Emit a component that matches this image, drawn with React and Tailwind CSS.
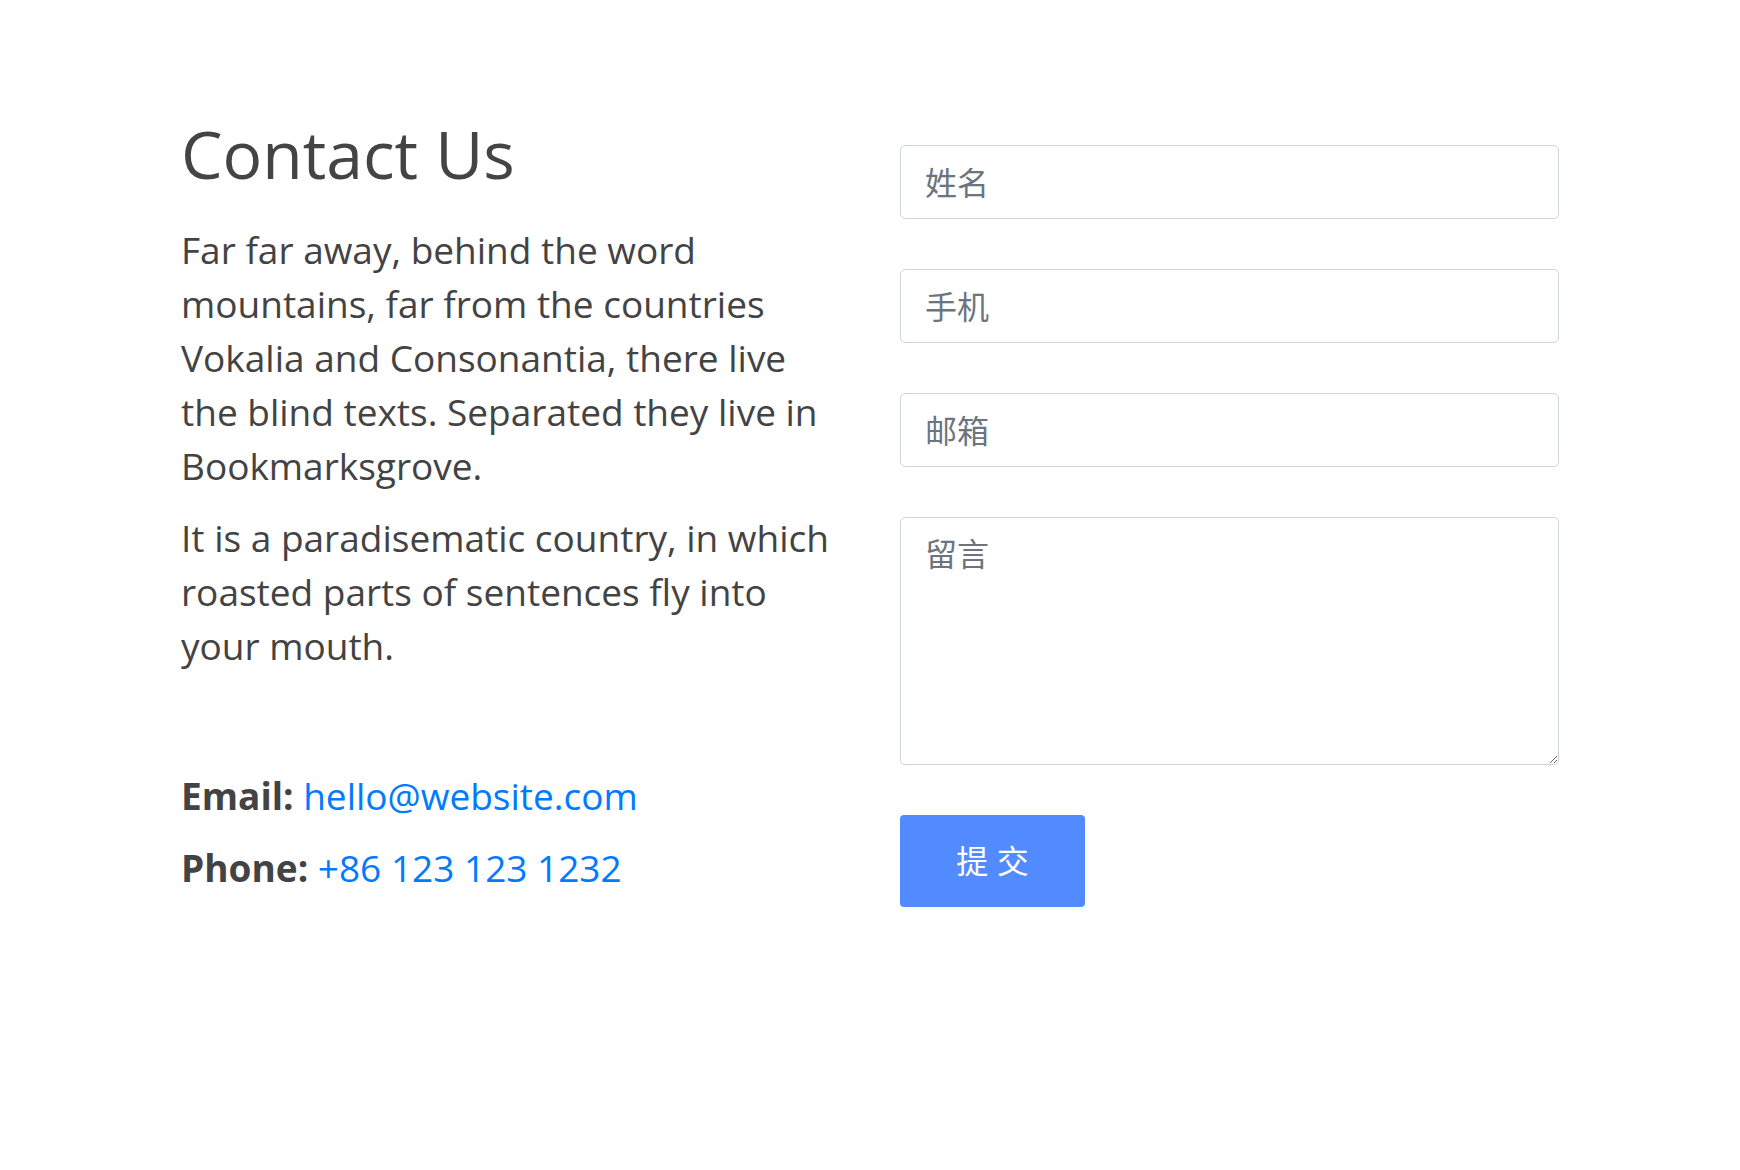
import React from 'react'

const fields = [
  { name: 'name', placeholder: '姓名', type: 'text' },
  { name: 'phone', placeholder: '手机', type: 'tel' },
  { name: 'email', placeholder: '邮箱', type: 'email' },
]

const fieldClass =
  'block w-full rounded-[5px] border border-[#ced4da] bg-white px-[24px] py-[12px] text-[32px] leading-[48px] text-[#495057] outline-none placeholder:text-[#6c757d]'

export default function App() {
  return (
    <div className="min-h-screen bg-white font-['Open_Sans','Noto_Sans_CJK_SC',sans-serif] text-[#434343]">
      <section className="mx-auto grid w-[1378px] grid-cols-2 gap-x-[60px] pt-[114px]">
        <div>
          <h1 className="mb-[31px] text-[66px] leading-[78px] font-normal text-[#444]">Contact Us</h1>
          <div className="max-w-[655px] text-[37px] leading-[54px]">
            <p className="mb-[18px]">
              Far far away, behind the word mountains, far from the countries Vokalia and Consonantia, there live the
              blind texts. Separated they live in Bookmarksgrove.
            </p>
            <p>It is a paradisematic country, in which roasted parts of sentences fly into your mouth.</p>
          </div>
          <div className="mt-[87px] text-[37px] leading-[72px]">
            <p>
              <span className="font-bold">Email:</span>{' '}
              <a href="#" className="text-[#007bff]">
                hello@website.com
              </a>
            </p>
            <p>
              <span className="font-bold">Phone:</span>{' '}
              <a href="#" className="text-[#007bff]">
                +86 123 123 1232
              </a>
            </p>
          </div>
        </div>

        <form className="flex flex-col gap-[50px] pt-[31px]" onSubmit={(e) => e.preventDefault()}>
          {fields.map((f) => (
            <input key={f.name} name={f.name} type={f.type} placeholder={f.placeholder} className={`${fieldClass} h-[74px]`} />
          ))}
          <textarea name="message" placeholder="留言" className={`${fieldClass} h-[248px]`} />
          <div>
            <button
              type="submit"
              className="h-[92px] w-[185px] rounded-[4px] bg-[#528bff] text-[32px] leading-none text-white"
            >
              提 交
            </button>
          </div>
        </form>
      </section>
    </div>
  )
}
